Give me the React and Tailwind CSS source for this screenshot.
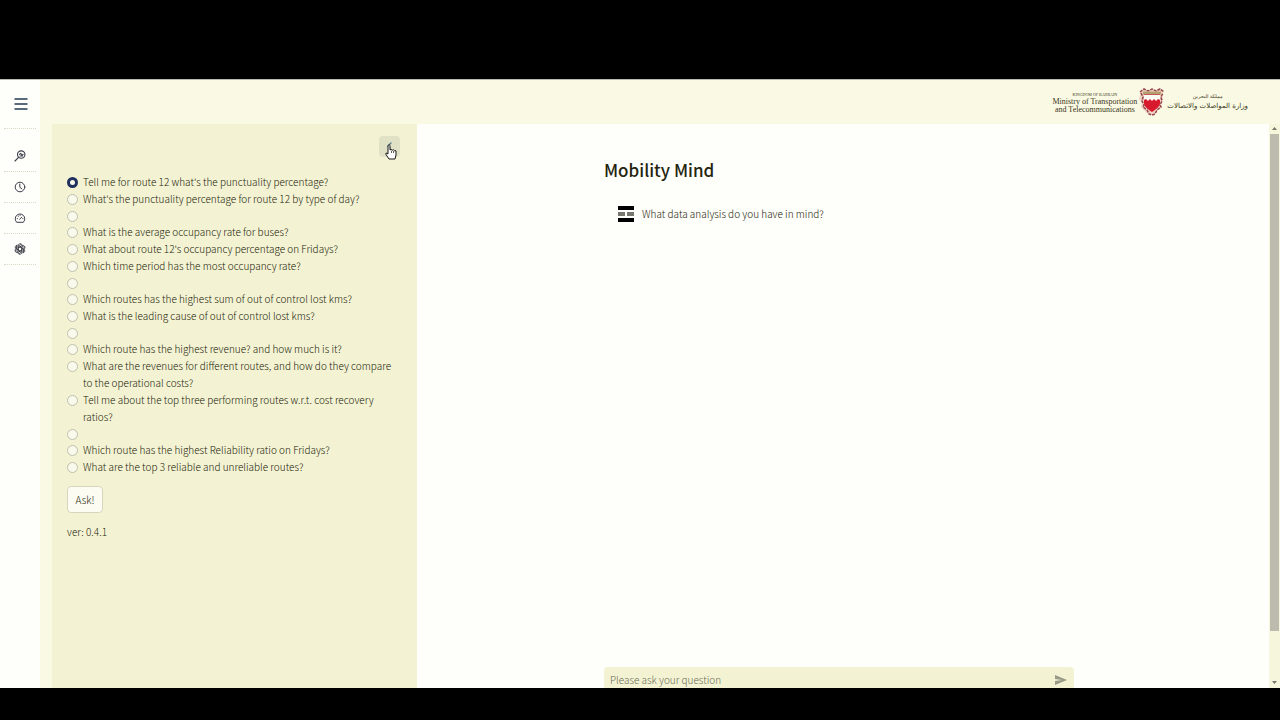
import React from 'react';

const questions = [
  "Tell me for route 12 what's the punctuality percentage?",
  "What's the punctuality percentage for route 12 by type of day?",
  '',
  'What is the average occupancy rate for buses?',
  "What about route 12's occupancy percentage on Fridays?",
  'Which time period has the most occupancy rate?',
  '',
  'Which routes has the highest sum of out of control lost kms?',
  'What is the leading cause of out of control lost kms?',
  '',
  'Which route has the highest revenue? and how much is it?',
  'What are the revenues for different routes, and how do they compare to the operational costs?',
  'Tell me about the top three performing routes w.r.t. cost recovery ratios?',
  '',
  'Which route has the highest Reliability ratio on Fridays?',
  'What are the top 3 reliable and unreliable routes?',
];

const stroke = { fill: 'none', stroke: 'currentColor', strokeLinecap: 'round', strokeLinejoin: 'round' };

function SearchIcon() {
  return (
    <svg viewBox="0 0 12 12" className="size-3" {...stroke} strokeWidth="1.1">
      <circle cx="7.2" cy="4.6" r="3.7" />
      <path d="M4.5 7.3 1 11M5.6 4.4l1-1 1.6 2 .9-1M6 6h2.4" />
    </svg>
  );
}

function ClockIcon() {
  return (
    <svg viewBox="0 0 12 12" className="size-3" {...stroke} strokeWidth="1">
      <circle cx="6" cy="6" r="4.8" />
      <path d="M5.8 3v3.2l2 1.6" />
    </svg>
  );
}

function GaugeIcon() {
  return (
    <svg viewBox="0 0 12 12" className="size-3" {...stroke} strokeWidth="1">
      <path d="M2.4 10a4.8 4.8 0 1 1 7.2 0zM5.6 7.2l2.2-2M3.2 6.6h.2M4.2 4.2h.2M6 3.3h.2M8.8 6.6h.2" />
    </svg>
  );
}

function KnotIcon() {
  return (
    <svg viewBox="0 0 12 12" className="size-3" {...stroke} strokeWidth="0.8">
      {[0, 60, 120, 180, 240, 300].map((a) => (
        <path key={a} transform={`rotate(${a} 6 6)`} d="M4.1 7V2.800a2.100 2.100 0 0 1 3.900-1.100M4.300 4.900l3.300-2 2.800 1.600" />
      ))}
    </svg>
  );
}

function Crest() {
  return (
    <svg viewBox="0 0 26 28" className="h-7 w-6.5 shrink-0" aria-hidden="true">
      <path d="M1 3 5 1l4 1 4-1 4 1 4-1 4 2-2 4 1 4-2 5 1 3-4 3-3 3-4 2-4-2-3-3-3-3 1-4-3-4 1-4z" fill="#efd3c3" />
      <path d="M1 4l4-3 4 2 4-2 4 2 4-2 4 3M2 5l2 4-1 4 2 4-1 2 4 3 2 4 3 1 3-1 2-4 4-3-1-2 2-4-1-4 2-4" fill="none" stroke="#96444c" strokeWidth="1.500" strokeDasharray="3 1" />
      <path d="M5 5h16v10c0 4-5 7-8 9-3-2-8-5-8-9z" fill="#d8182d" />
      <path d="M5 7h16v5l-2-1-2 2-2-2-2 2-2-2-2 2-2-2-2 1z" fill="#fcfaf4" />
      <path d="M4 5h18" stroke="#b39f70" strokeWidth="3" />
    </svg>
  );
}

function MenuButton({ label, children }) {
  return (
    <button aria-label={label} className="flex h-[31px] w-full items-center justify-center border-b border-dotted border-[#d9d9c4] text-[#3b3c48]">
      {children}
    </button>
  );
}

function Question({ text, index }) {
  return (
    <label className={`flex gap-[5px] ${text ? '' : 'h-4'}`}>
      <input
        type="radio"
        name="question"
        defaultChecked={index === 0}
        aria-label={text || 'Blank option'}
        className="mt-1 size-[11px] shrink-0 appearance-none rounded-full border border-[#c0c0ae] bg-[#fafaec] checked:border-[3px] checked:border-[#1f2f5e]"
      />
      <span>{text}</span>
    </label>
  );
}

export default function App() {
  return (
    <div className="flex h-screen flex-col bg-black py-8 pt-[79px] font-['Noto_Sans_CJK_SC',sans-serif] text-[10px] leading-[17px] font-light text-[#1c1c08]">
      <div className="flex min-h-0 flex-1 border-t border-[#b9b9b0] bg-[#fefefa]">
        <nav className="flex w-10 shrink-0 flex-col px-1" aria-label="Main">
          <button aria-label="Menu" className="flex h-[49px] items-center justify-center border-b border-dotted border-[#d9d9c4] text-[#263a50]">
            <svg viewBox="0 0 14 12" className="ml-0.5 h-3 w-3.5" {...stroke} strokeWidth="1.4">
              <path d="M1 1h12M1 6h12M1 11h12" />
            </svg>
          </button>
          <div className="pt-3">
            <MenuButton label="Explore"><SearchIcon /></MenuButton>
            <MenuButton label="History"><ClockIcon /></MenuButton>
            <MenuButton label="Dashboard"><GaugeIcon /></MenuButton>
            <MenuButton label="Assistant"><KnotIcon /></MenuButton>
          </div>
        </nav>
        <div className="flex min-w-0 flex-1 flex-col">
          <header className="flex h-11 shrink-0 items-center justify-end gap-0.5 bg-[#fafae4] pr-8 font-['Liberation_Serif',serif] font-normal text-[#3a3620]">
            <div className="text-center text-[8px] leading-2 whitespace-nowrap">
              <p className="text-[4px] leading-[7px]">KINGDOM OF BAHRAIN</p>
              <p>Ministry of Transportation</p>
              <p>and Telecommunications</p>
            </div>
            <Crest />
            <div dir="rtl" lang="ar" className="text-center font-['DejaVu_Sans',sans-serif] whitespace-nowrap">
              <p className="text-[5px] leading-[7px]">مملكة البحرين</p>
              <p className="text-[7px] leading-3">وزارة المواصلات والاتصالات</p>
            </div>
          </header>
          <div className="flex min-h-0 flex-1">
            <div className="w-3 shrink-0 bg-[#fafae4]" />
            <aside className="w-[365px] shrink-0 bg-[#f3f3d4] px-[15px]">
              <div className="flex h-[49px] justify-end pt-3">
                <button aria-label="Collapse sidebar" className="relative mr-0.5 flex size-[21px] items-center justify-center rounded bg-[#e1e1c6] text-[#527d86]">
                  <svg viewBox="0 0 10 10" className="size-2.5" {...stroke} strokeWidth="1.3"><path d="M6 1 3 4l2 2" /></svg>
                  <svg viewBox="0 0 12 16" className="absolute top-2 left-1.5 h-4 w-3" aria-hidden="true">
                    <path d="M3 1.500q1.300-1.500 2 0V6l1-.6 1.200.8 1.300-.4 1 .9 1.500.1V11L10 15H4L1 10.500 1 9l2 .8z" fill="#fff" stroke="#161616" strokeWidth="1" />
                    <path d="M6.500 7v2M8.500 7v2" stroke="#161616" strokeWidth=".7" />
                  </svg>
                </button>
              </div>
              <fieldset>
                {questions.map((text, i) => <Question key={i} text={text} index={i} />)}
              </fieldset>
              <button className="mt-[11px] h-[27px] w-9 rounded border border-[#d6d6be] bg-[#fcfcf2]">Ask!</button>
              <p className="mt-[10px]">ver: 0.4.1</p>
            </aside>
            <main className="flex min-w-0 flex-1 flex-col items-center">
              <div className="flex w-full max-w-[470px] flex-1 flex-col">
                <h1 className="mt-[34px] text-[17px] leading-6 font-medium text-[#24240f]">Mobility Mind</h1>
                <div className="mt-[23px] flex items-center gap-2 pl-[14px]">
                  <svg viewBox="0 0 16 16" className="size-4" aria-hidden="true">
                    <path d="M0 0h16v4H0zM0 12h16v4H0z" fill="#000" />
                    <path d="M0 6h7v4H0zM9 6h7v4H9z" fill="#77776f" />
                  </svg>
                  <p>What data analysis do you have in mind?</p>
                </div>
                <form className="mt-auto flex h-[21px] items-center rounded-t bg-[#f3f3d4] pt-1 pr-[7px] pl-1.5">
                  <input aria-label="Question" placeholder="Please ask your question" className="min-w-0 flex-1 bg-transparent outline-none placeholder:text-[#6c6c54]" />
                  <button type="button" aria-label="Send">
                    <svg viewBox="0 0 12 10" className="h-2.5 w-3" fill="#999988"><path d="M0 0 12 5 0 10V6l7-1-7-1z" /></svg>
                  </button>
                </form>
              </div>
            </main>
            <div className="w-2 shrink-0" />
            <div className="flex w-[11px] shrink-0 flex-col items-center bg-[#f6f6dd] text-[#77776b]">
              <svg viewBox="0 0 5 10" className="h-2.5 w-[5px]" fill="currentColor"><path d="M0 6 2.500 3 5 6z" /></svg>
              <div className="h-[497px] w-[9px] bg-[#bbbbae]" />
              <svg viewBox="0 0 5 10" className="mt-auto h-2.5 w-[5px]" fill="currentColor"><path d="M0 3 2.500 6 5 3z" /></svg>
            </div>
          </div>
        </div>
      </div>
    </div>
  );
}
